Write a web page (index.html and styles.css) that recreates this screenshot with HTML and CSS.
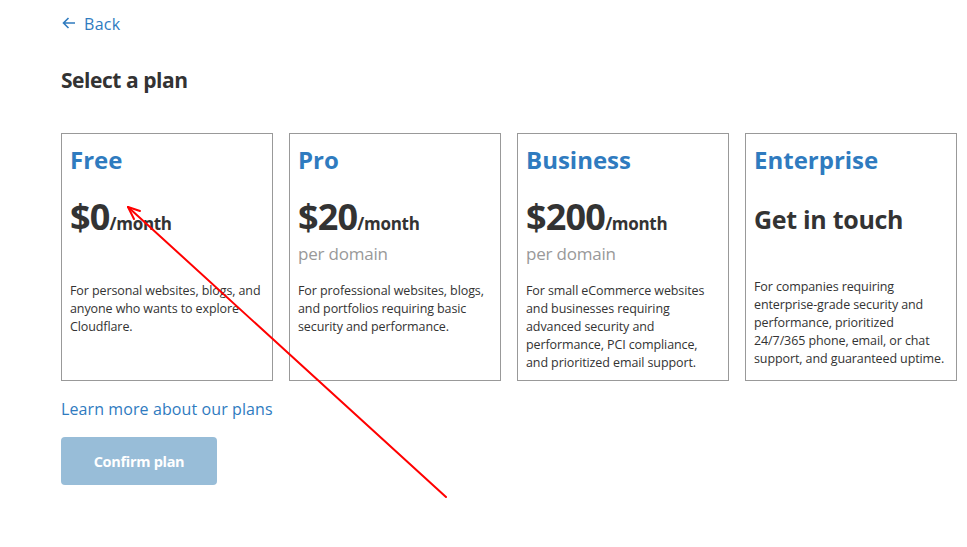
FILE: index.html
```html
<!DOCTYPE html>
<html>
<head>
<meta charset="utf-8">
<link rel="stylesheet" href="styles.css">
</head>
<body>
<div class="page">
  <a class="back" href="#"><svg class="back-icon" width="14" height="12" viewBox="0 0 14 12"><path d="M13 6H1.5M6.5 1L1.5 6l5 5" fill="none" stroke="currentColor" stroke-width="1.6"/></svg><span>Back</span></a>
  <h1 class="title">Select a plan</h1>
  <div class="plans">
    <div class="plan">
      <div class="plan-name">Free</div>
      <div class="price"><span class="amount">$0</span><span class="per">/month</span></div>
      <div class="sub">&nbsp;</div>
      <p class="desc">For personal websites, blogs, and anyone who wants to explore Cloudflare.</p>
    </div>
    <div class="plan">
      <div class="plan-name">Pro</div>
      <div class="price"><span class="amount">$20</span><span class="per">/month</span></div>
      <div class="sub">per domain</div>
      <p class="desc">For professional websites, blogs, and portfolios requiring basic security and performance.</p>
    </div>
    <div class="plan">
      <div class="plan-name">Business</div>
      <div class="price"><span class="amount">$200</span><span class="per">/month</span></div>
      <div class="sub">per domain</div>
      <p class="desc">For small eCommerce websites and businesses requiring advanced security and performance, PCI compliance, and prioritized email support.</p>
    </div>
    <div class="plan">
      <div class="plan-name">Enterprise</div>
      <div class="touch">Get in touch</div>
      <p class="desc desc-ent">For companies requiring enterprise-grade security and performance, prioritized 24/7/365 phone, email, or chat support, and guaranteed uptime.</p>
    </div>
  </div>
  <a class="learn" href="#">Learn more about our plans</a>
  <button class="confirm">Confirm plan</button>
</div>
<svg class="annotation" width="967" height="547" viewBox="0 0 967 547">
  <g stroke="#f00" stroke-width="2" fill="none" stroke-linecap="round">
    <path d="M446 497L128 207"/>
    <path d="M128 207L134 219M128 207L140 211"/>
  </g>
</svg>
</body>
</html>
```
FILE: styles.css
```css
* { box-sizing: border-box; }
html, body { margin: 0; padding: 0; background: #fff; }
body {
  font-family: "Open Sans", "Noto Sans", sans-serif;
  color: #333;
  width: 967px;
  height: 547px;
  overflow: hidden;
  position: relative;
}
.page {
  padding: 12px 0 0 61px;
  display: flex;
  flex-direction: column;
  align-items: flex-start;
}
.back {
  display: flex;
  align-items: center;
  gap: 8px;
  color: #2f7bbf;
  text-decoration: none;
  font-size: 16px;
  line-height: 24px;
  letter-spacing: 0.3px;
}
.back-icon { margin-left: 1px; margin-top: -3px; }
.title {
  margin: 30px 0 0;
  font-size: 21px;
  font-weight: 700;
  line-height: 28px;
  letter-spacing: -0.45px;
  color: #333;
}
.plans {
  display: flex;
  gap: 16px;
  margin-top: 39px;
}
.plan {
  flex: 0 0 212px;
  width: 212px;
  height: 248px;
  border: 1px solid #999;
  padding: 10px 8px 0 8px;
}
.plan-name {
  color: #2f7bbf;
  font-size: 24px;
  font-weight: 700;
  line-height: 32px;
  letter-spacing: 0px;
}
.price {
  margin-top: 19px;
  line-height: 44px;
  white-space: nowrap;
}
.amount {
  font-size: 36px;
  font-weight: 700;
  letter-spacing: -0.8px;
}
.per {
  font-size: 17px;
  font-weight: 700;
  letter-spacing: -0.3px;
}
.sub {
  color: #999;
  font-size: 17px;
  line-height: 24px;
  margin-top: -4px;
  letter-spacing: -0.2px;
}
.touch {
  margin-top: 26px;
  font-size: 25px;
  font-weight: 700;
  line-height: 34px;
  letter-spacing: -0.3px;
}
.desc {
  margin: 16px 0 0;
  font-size: 12.5px;
  line-height: 18px;
  letter-spacing: -0.1px;
  color: #333;
}
.desc-ent { margin-top: 42px; }
.learn {
  margin-top: 17px;
  color: #2f7bbf;
  font-size: 16px;
  line-height: 22px;
  text-decoration: none;
  letter-spacing: 0.1px;
}
.confirm {
  margin-top: 17px;
  width: 156px;
  height: 48px;
  border: 0;
  border-radius: 4px;
  background: #98bdd8;
  color: #fff;
  font-family: "Open Sans", "Noto Sans", sans-serif;
  font-size: 14.5px;
  font-weight: 700;
  letter-spacing: -0.3px;
}
.annotation {
  position: absolute;
  left: 0;
  top: 0;
  pointer-events: none;
}
```
